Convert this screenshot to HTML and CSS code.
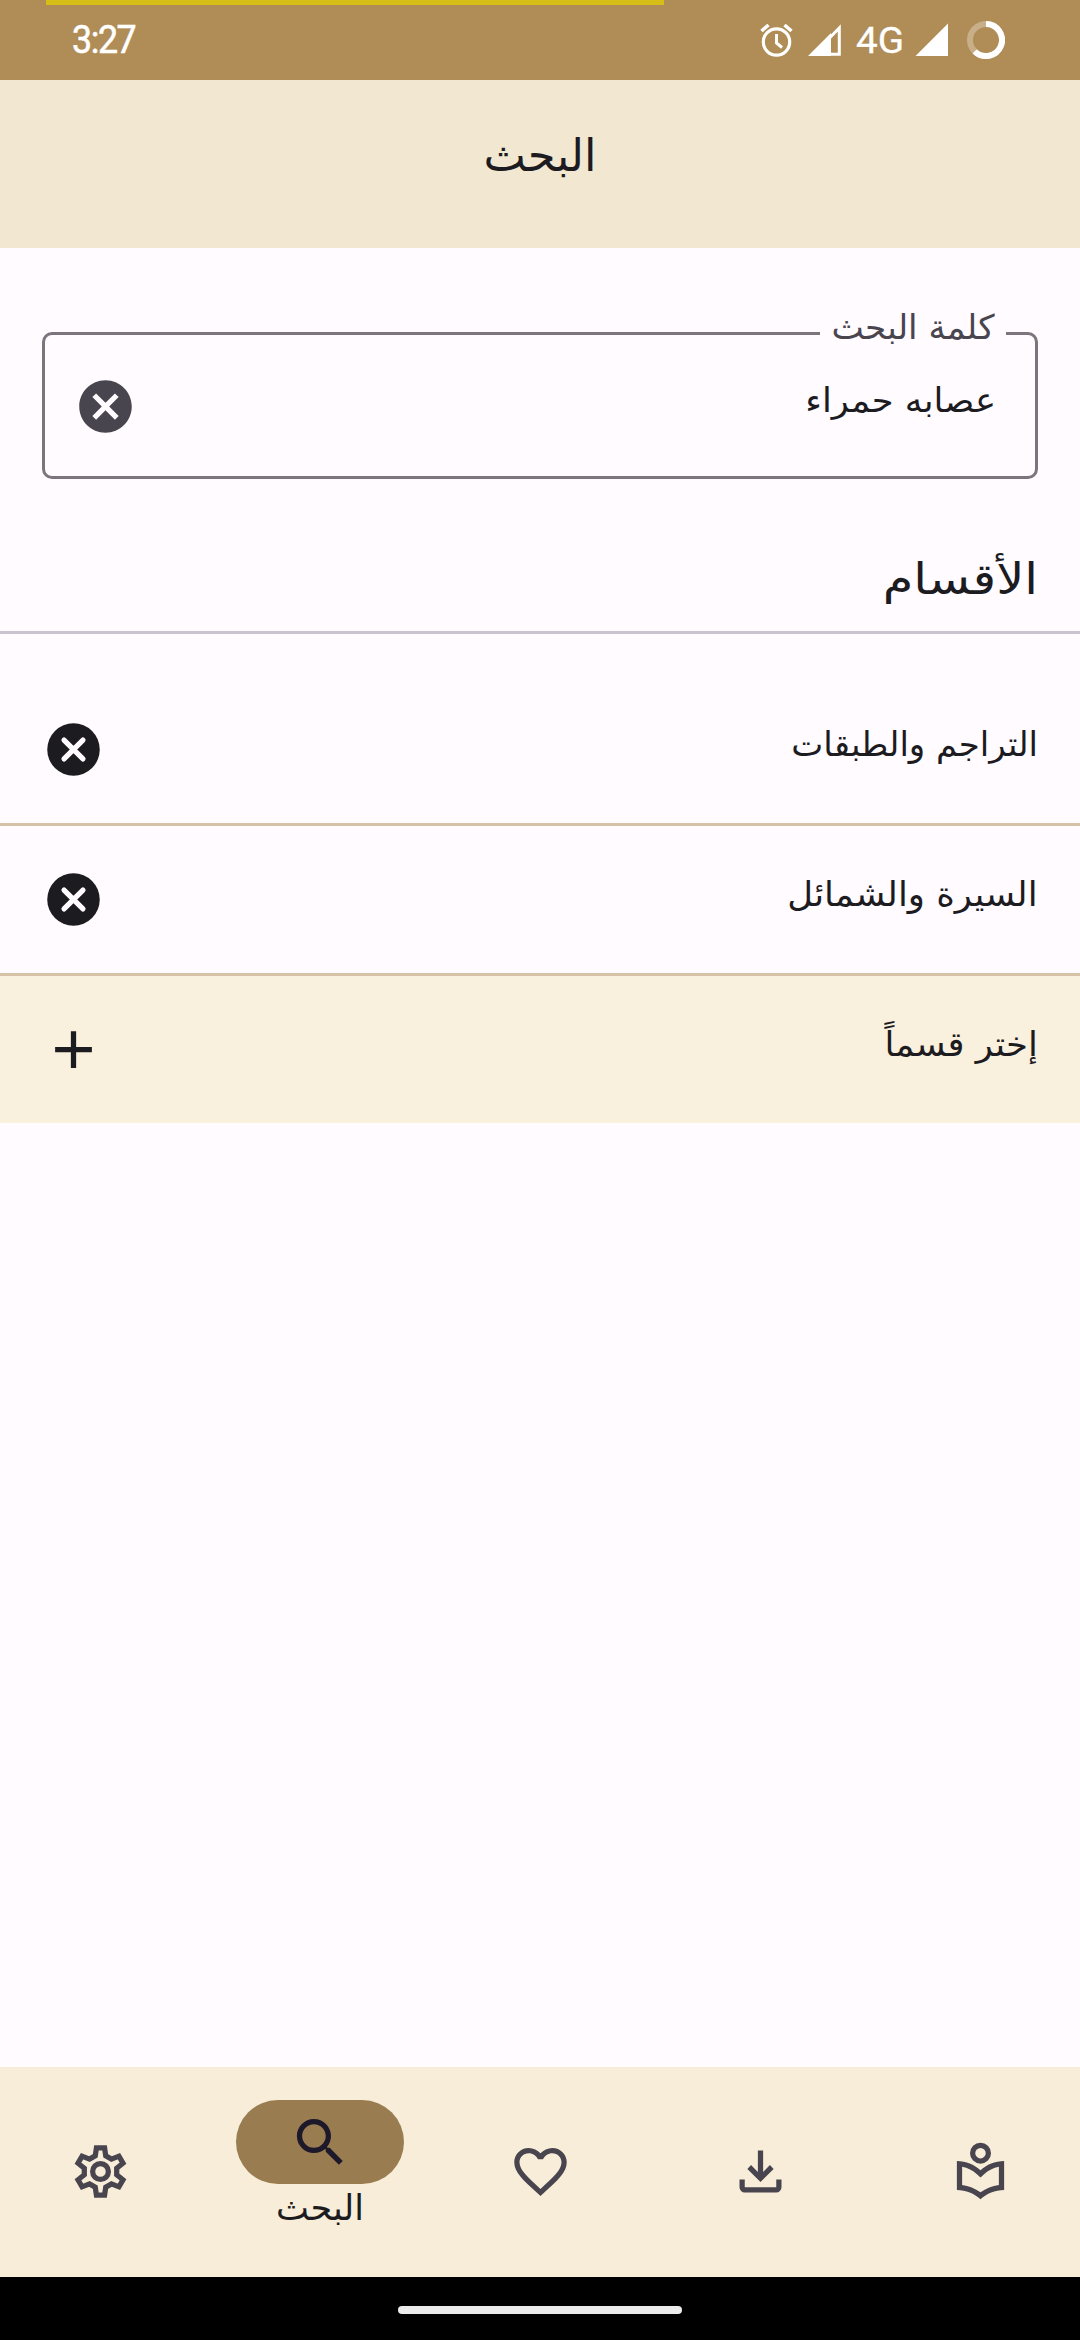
FILE: index.html
```html
<!DOCTYPE html>
<html lang="ar" dir="rtl">
<head>
<meta charset="utf-8">
<title>البحث</title>
<link rel="stylesheet" href="styles.css">
</head>
<body>
<div class="screen">
  <div class="status" dir="ltr">
    <div class="progress"></div>
    <span class="clock">3:27</span>
    <svg class="status-icons" width="250" height="80" viewBox="755 0 250 80">
      <g fill="none" stroke="#fff">
        <circle cx="776.5" cy="42" r="13.2" stroke-width="3.2"/>
        <path d="M776.5 34v9l5.5 4.5" stroke-width="3"/>
        <path d="M761.5 31l7-6M791.5 31l-7-6" stroke-width="3.6"/>
        <path d="M830 54.200h9.300V28L829 38.500" stroke-width="3"/>
      </g>
      <path d="M808 56l23-23v23z" fill="#fff"/>
      <path d="M915.500 56L948 23.500V56z" fill="#fff"/>
      <circle cx="986" cy="40" r="16" fill="none" stroke="#fff" stroke-opacity=".3" stroke-width="6"/>
      <path d="M986 24a16 16 0 1 1-11.300 27.300" fill="none" stroke="#fff" stroke-width="6"/>
      <text class="network" x="856" y="53" textLength="48" lengthAdjust="spacingAndGlyphs">4G</text>
    </svg>
  </div>
  <header class="appbar"><h1 class="title">البحث</h1></header>
  <main class="content">
    <fieldset class="field">
      <legend class="label"><span class="label-text">كلمة البحث</span></legend>
      <span class="value">عصابه حمراء</span>
      <svg class="icon clear" viewBox="0 0 24 24"><path d="M12 2C6.470 2 2 6.470 2 12s4.470 10 10 10 10-4.470 10-10S17.530 2 12 2zm5 13.590L15.590 17 12 13.410 8.410 17 7 15.590 10.590 12 7 8.410 8.410 7 12 10.590 15.590 7 17 8.410 13.410 12z"/></svg>
    </fieldset>
    <h2 class="heading"><span class="heading-text">الأقسام</span></h2>
    <ul class="list">
      <li class="row"><span class="row-text">التراجم والطبقات</span>
        <svg class="icon" viewBox="0 0 24 24"><circle cx="12" cy="12" r="10"/><path class="cross" d="M8.400 8.400l7.200 7.200M15.600 8.400l-7.200 7.200"/></svg></li>
      <li class="row"><span class="row-text wide">السيرة والشمائل</span>
        <svg class="icon" viewBox="0 0 24 24"><circle cx="12" cy="12" r="10"/><path class="cross" d="M8.400 8.400l7.200 7.200M15.600 8.400l-7.200 7.200"/></svg></li>
      <li class="row add"><span class="row-text wide">إختر قسماً</span>
        <svg class="icon" viewBox="0 0 24 24"><path d="M19 13h-6v6h-2v-6H5v-2h6V5h2v6h6z"/></svg></li>
    </ul>
  </main>
  <nav class="nav">
    <a class="tab"><svg class="icon" viewBox="0 0 24 24"><circle class="line" cx="12" cy="5" r="3"/><path d="M12 11.550C9.640 9.350 6.480 8 3 8v11c3.480 0 6.640 1.350 9 3.550 2.360-2.190 5.520-3.550 9-3.550V8c-3.480 0-6.640 1.350-9 3.550zm7 5.580c-2.530.34-4.930 1.300-7 2.820-2.060-1.520-4.470-2.490-7-2.830v-6.950c2.100.38 4.050 1.350 5.640 2.830L12 14.280l1.360-1.270c1.590-1.480 3.540-2.450 5.640-2.830v6.950z"/></svg></a>
    <a class="tab"><svg class="icon" viewBox="0 0 24 24"><path d="M12 16l-5-5 1.400-1.450 2.600 2.600V4h2v8.150l2.600-2.600L17 11zm-6 4q-.825 0-1.412-.587T4 18v-3h2v3h12v-3h2v3q0 .825-.587 1.413T18 20z"/></svg></a>
    <a class="tab"><svg class="icon" viewBox="0 0 24 24"><path d="M16.500 3c-1.740 0-3.410.81-4.500 2.090C10.910 3.810 9.240 3 7.500 3 4.420 3 2 5.420 2 8.500c0 3.780 3.400 6.860 8.550 11.540L12 21.350l1.450-1.320C18.600 15.360 22 12.280 22 8.500 22 5.420 19.580 3 16.500 3zm-4.400 15.550l-.1.100-.1-.1C7.140 14.240 4 11.390 4 8.500 4 6.500 5.500 5 7.500 5c1.540 0 3.040.99 3.570 2.360h1.870C13.460 5.990 14.960 5 16.500 5c2 0 3.500 1.500 3.500 3.500 0 2.890-3.140 5.740-7.900 10.050z"/></svg></a>
    <a class="tab active"><span class="pill"><svg class="icon" viewBox="0 0 24 24"><path d="M15.500 14h-.79l-.28-.27C15.410 12.590 16 11.110 16 9.500 16 5.910 13.090 3 9.500 3S3 5.910 3 9.500 5.910 16 9.500 16c1.610 0 3.090-.59 4.230-1.570l.27.28v.79l5 4.990L20.490 19zm-6 0C7.010 14 5 11.990 5 9.500S7.010 5 9.500 5 14 7.010 14 9.500 11.990 14 9.500 14z"/></svg></span><span class="tab-label">البحث</span></a>
    <a class="tab"><svg class="icon" viewBox="-12 -12 24 24"><circle class="line" r="3"/><path class="line" d="M1.550-9L2-5.970 4.180-4.710 7.020-5.840 8.570-3.160 6.170-1.250V1.250L8.570 3.160 7.020 5.840 4.180 4.710 2 5.970 1.550 9H-1.550L-2 5.970-4.180 4.710-7.020 5.840-8.570 3.160-6.170 1.250V-1.250L-8.570-3.160-7.020-5.840-4.180-4.710-2-5.970-1.550-9z"/></svg></a>
  </nav>
  <div class="gesture"><div class="handle"></div></div>
</div>
</body>
</html>
```
FILE: styles.css
```css
* { box-sizing: border-box; }
body { margin: 0; font-family: "DejaVu Sans", sans-serif; color: #1c1b1f; }
.screen { width: 1080px; height: 2340px; display: flex; flex-direction: column; background: #fffbff; overflow: hidden; }
.status { position: relative; height: 80px; background: #b08d57; display: flex; align-items: center; justify-content: space-between; padding: 0 75px 0 72px; }
.progress { position: absolute; left: 46px; top: 0; width: 618px; height: 5px; background: #d6bd18; }
.clock { color: #fff; font: 400 38px/78px Roboto, sans-serif; letter-spacing: -1.5px; transform: scaleX(.94); transform-origin: left; -webkit-text-stroke: .6px #fff; }
.network { fill: #fff; stroke: #fff; stroke-width: .3px; font: 400 37px Roboto, sans-serif; }
.appbar { height: 168px; background: #f2e7d1; text-align: center; }
.title { margin: 0; font-size: 45px; font-weight: 400; line-height: 151px; }
.content { flex: 1; }
.field { height: 147px; margin: 84px 42px 0; padding: 2px 29px 0; border: 3px solid #7c757e; border-radius: 10px; display: flex; align-items: center; justify-content: space-between; }
.label { width: 186px; height: 3px; padding: 0 11px; color: #49454f; font-size: 34px; line-height: 3px; white-space: nowrap; }
.label-text { display: inline-block; transform: translateY(-6px) scaleX(1.01); transform-origin: right; }
.value { padding: 0 10px 13px 0; font-size: 34px; transform: scaleX(1.04); transform-origin: right; }
.icon { width: 63px; height: 63px; fill: #1c1b1f; flex: none; }
.clear { fill: #49454f; }
.heading { margin: 0; height: 155px; border-bottom: 3px solid #cac4d0; padding: 70px 42px 0; font-weight: 400; font-size: 43px; line-height: 60px; }
.heading-text { display: inline-block; transform: scaleX(1.15); transform-origin: right; }
.list { list-style: none; margin: 42px 0 0; padding: 0; }
.row { height: 150px; border-bottom: 3px solid #d6c2a6; padding: 0 42px; display: flex; align-items: center; justify-content: space-between; font-size: 34px; }
.row-text { padding-bottom: 11px; }
.wide { transform: scaleX(1.045); transform-origin: right; }
.add { height: 147px; border: 0; background: #f9f0dd; }
.cross { stroke: #fffbff; stroke-width: 2; stroke-linecap: round; }
.nav { height: 210px; background: #f8edd9; display: flex; justify-content: space-between; padding: 0 16px; }
.tab { width: 168px; padding-bottom: 1px; display: flex; flex-direction: column; align-items: center; justify-content: center; }
.tab .icon { fill: #49454f; }
.tab .line { fill: none; stroke: #49454f; stroke-width: 2; }
.active { justify-content: flex-start; padding-top: 33px; }
.pill { width: 168px; height: 84px; border-radius: 42px; background: #997c4f; display: flex; align-items: center; justify-content: center; }
.tab .pill .icon { fill: #1d192b; }
.tab-label { font-size: 35px; line-height: 49px; }
.gesture { height: 63px; padding-top: 2px; background: #000; display: flex; justify-content: center; align-items: center; }
.handle { width: 284px; height: 8px; border-radius: 4px; background: #ececec; }
```
